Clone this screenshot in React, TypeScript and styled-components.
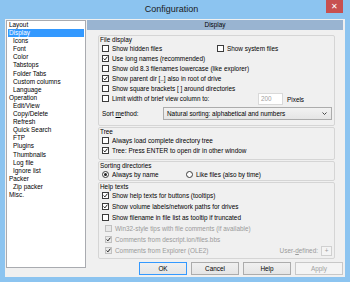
import React from "react";
import styled, { createGlobalStyle } from "styled-components";

const GlobalStyle = createGlobalStyle`
  html, body { margin: 0; padding: 0; }
  body {
    width: 350px;
    height: 282px;
    overflow: hidden;
    background: #8cc4f0;
    font-family: "Liberation Sans", Arial, sans-serif;
  }
`;

const Window = styled.div`
  width: 350px;
  height: 282px;
  box-sizing: border-box;
  padding: 0 5px 5px;
  background: #8cc4f0;
  display: flex;
  flex-direction: column;
`;

const TitleBar = styled.div`
  height: 19px;
  margin: 0 -5px;
  padding-right: 7px;
  display: grid;
  grid-template-columns: 1fr auto 1fr;
  align-items: start;
`;

const Title = styled.div`
  grid-column: 2;
  line-height: 18px;
  font-size: 9px;
  color: #1a1a1a;
`;

const CloseButton = styled.div`
  justify-self: end;
  width: 17px;
  height: 13px;
  background: #c75050;
  color: #fff;
  font-size: 8px;
  line-height: 13px;
  text-align: center;
`;

const Client = styled.div`
  flex: 1;
  background: #f0f0f0;
  display: flex;
  gap: 1px;
  padding: 1px 2px 0 1px;
  font-size: 6.4px;
  color: #000;
`;

const Sidebar = styled.div`
  width: 80px;
  height: 248px;
  box-sizing: border-box;
  border: 1px solid #a9abb0;
  background: #fff;
  padding: 0 1px;
`;

const TreeItem = styled.div<{ $level: number; $selected?: boolean }>`
  height: 8.1px;
  line-height: 8.1px;
  padding-left: ${(p) => (p.$level ? 5 : 1)}px;
  background: ${(p) => (p.$selected ? "#3399ff" : "transparent")};
  color: ${(p) => (p.$selected ? "#fff" : "#000")};
  white-space: nowrap;
`;

const Main = styled.div`
  flex: 1;
  display: flex;
  flex-direction: column;
`;

const PageHeader = styled.div`
  height: 10px;
  line-height: 10px;
  background: #99b4d1;
  text-align: center;
`;

const Groups = styled.div`
  display: flex;
  flex-direction: column;
  gap: 1px;
  padding: 5px 8px 0 11px;
`;

const GroupBox = styled.div<{ $pad: number }>`
  border: 1px solid #d5d5d5;
  border-radius: 2px;
  padding: 0 2px ${(p) => p.$pad}px 3px;
`;

const Legend = styled.div`
  height: 6px;
  line-height: 6px;
  margin: 1px 0 0 -2px;
  white-space: nowrap;
`;

const Row = styled.div<{ $h?: number; $indent?: number }>`
  height: ${(p) => p.$h ?? 10}px;
  display: flex;
  align-items: center;
  padding-left: ${(p) => p.$indent ?? 0}px;
  white-space: nowrap;
`;

const Option = styled.label<{ $w?: number; $disabled?: boolean }>`
  display: flex;
  align-items: center;
  gap: 3px;
  width: ${(p) => (p.$w ? `${p.$w}px` : "auto")};
  flex: none;
  color: ${(p) => (p.$disabled ? "#9a9a9a" : "#000")};
`;

const Box = styled.span<{ $disabled?: boolean }>`
  width: 7px;
  height: 7px;
  box-sizing: border-box;
  border: 1px solid ${(p) => (p.$disabled ? "#c0c0c0" : "#3c3c3c")};
  background: ${(p) => (p.$disabled ? "#e8e8e8" : "#fff")};
  display: flex;
  align-items: center;
  justify-content: center;
  flex: none;
`;

const Radio = styled(Box)`
  border-radius: 50%;
`;

const Dot = styled.span`
  width: 3px;
  height: 3px;
  border-radius: 50%;
  background: #222;
`;

const NumberInput = styled.div`
  width: 25px;
  height: 12px;
  box-sizing: border-box;
  border: 1px solid #d9d9d9;
  background: #fff;
  color: #a0a0a0;
  line-height: 10px;
  padding-left: 2px;
  margin-top: 2px;
`;

const Unit = styled.span`
  margin-left: 4px;
  margin-top: 2px;
`;

const FieldLabel = styled.span<{ $w: number }>`
  width: ${(p) => p.$w}px;
  flex: none;
`;

const Select = styled.div`
  width: 169px;
  height: 13px;
  box-sizing: border-box;
  border: 1px solid #acacac;
  background: linear-gradient(#f2f2f2, #e5e5e5);
  display: flex;
  align-items: center;
  padding: 0 4px 0 3px;
`;

const SelectText = styled.span`
  flex: 1;
`;

const Key = styled.span`
  text-decoration: underline;
`;

const Spacer = styled.span`
  flex: 1;
`;

const DisabledText = styled.span`
  color: #9a9a9a;
`;

const SmallButton = styled.div`
  width: 11px;
  height: 10px;
  box-sizing: border-box;
  border: 1px solid #d0d0d0;
  background: #f4f4f4;
  color: #9a9a9a;
  text-align: center;
  line-height: 8px;
  margin-left: 3px;
`;

const ButtonRow = styled.div`
  margin-top: auto;
  padding-bottom: 2px;
  display: flex;
  justify-content: flex-end;
  gap: 4px;
`;

const Button = styled.div<{ $default?: boolean; $disabled?: boolean }>`
  width: 48px;
  height: 13px;
  box-sizing: border-box;
  border: 1px solid
    ${(p) => (p.$default ? "#3399ff" : p.$disabled ? "#c8c8c8" : "#acacac")};
  background: ${(p) =>
    p.$disabled ? "#f4f4f4" : "linear-gradient(#f0f0f0, #e5e5e5)"};
  color: ${(p) => (p.$disabled ? "#a0a0a0" : "#000")};
  text-align: center;
  line-height: 11px;
`;

const CheckMark = () => (
  <svg width="5" height="5" viewBox="0 0 5 5">
    <path d="M0.6 2.5 L1.9 3.9 L4.4 0.7" fill="none" stroke="#222" strokeWidth="1" />
  </svg>
);

interface ICheck {
  label: React.ReactNode;
  checked?: boolean;
  disabled?: boolean;
  width?: number;
}

const Check = (props: ICheck) => (
  <Option $w={props.width} $disabled={props.disabled}>
    <Box $disabled={props.disabled}>{props.checked && <CheckMark />}</Box>
    <span>{props.label}</span>
  </Option>
);

const RadioOption = (props: ICheck) => (
  <Option $w={props.width}>
    <Radio>{props.checked && <Dot />}</Radio>
    <span>{props.label}</span>
  </Option>
);

const tree: [string, number][] = [
  ["Layout", 0],
  ["Display", 0],
  ["Icons", 1],
  ["Font", 1],
  ["Color", 1],
  ["Tabstops", 1],
  ["Folder Tabs", 1],
  ["Custom columns", 1],
  ["Language", 1],
  ["Operation", 0],
  ["Edit/View", 1],
  ["Copy/Delete", 1],
  ["Refresh", 1],
  ["Quick Search", 1],
  ["FTP", 1],
  ["Plugins", 1],
  ["Thumbnails", 1],
  ["Log file", 1],
  ["Ignore list", 1],
  ["Packer", 0],
  ["Zip packer", 1],
  ["Misc.", 0],
];

const App = () => {
  return (
    <>
      <GlobalStyle />
      <Window>
        <TitleBar>
          <Title>Configuration</Title>
          <CloseButton>✕</CloseButton>
        </TitleBar>
        <Client>
          <Sidebar>
            {tree.map(([name, level]) => (
              <TreeItem key={name} $level={level} $selected={name === "Display"}>
                {name}
              </TreeItem>
            ))}
          </Sidebar>
          <Main>
            <PageHeader>Display</PageHeader>
            <Groups>
              <GroupBox $pad={2}>
                <Legend>File display</Legend>
                <Row>
                  <Check label="Show hidden files" width={115} />
                  <Check label="Show system files" />
                </Row>
                <Row>
                  <Check label="Use long names (recommended)" checked />
                </Row>
                <Row>
                  <Check label="Show old 8.3 filenames lowercase (like explorer)" />
                </Row>
                <Row>
                  <Check label="Show parent dir [..] also in root of drive" checked />
                </Row>
                <Row>
                  <Check label="Show square brackets [ ] around directories" />
                </Row>
                <Row>
                  <Check label="Limit width of brief view column to:" width={156} />
                  <NumberInput>200</NumberInput>
                  <Unit>Pixels</Unit>
                </Row>
                <Row $h={20}>
                  <FieldLabel $w={61}>
                    Sort <Key>m</Key>ethod:
                  </FieldLabel>
                  <Select>
                    <SelectText>Natural sorting: alphabetical and numbers</SelectText>
                    <svg width="5" height="3" viewBox="0 0 5 3">
                      <path d="M0.5 0.5 L2.5 2.5 L4.5 0.5" fill="none" stroke="#333" strokeWidth="0.9" />
                    </svg>
                  </Select>
                </Row>
              </GroupBox>
              <GroupBox $pad={4}>
                <Legend>Tree</Legend>
                <Row>
                  <Check label="Always load complete directory tree" />
                </Row>
                <Row>
                  <Check label="Tree: Press ENTER to open dir in other window" checked />
                </Row>
              </GroupBox>
              <GroupBox $pad={1}>
                <Legend>Sorting directories</Legend>
                <Row>
                  <RadioOption label="Always by name" checked width={84} />
                  <RadioOption label="Like files (also by time)" />
                </Row>
              </GroupBox>
              <GroupBox $pad={2}>
                <Legend>Help texts</Legend>
                <Row $h={11}>
                  <Check label="Show help texts for buttons (tooltips)" checked />
                </Row>
                <Row $h={11}>
                  <Check label="Show volume labels/network paths for drives" checked />
                </Row>
                <Row $h={11}>
                  <Check label="Show filename in file list as tooltip if truncated" />
                </Row>
                <Row $h={11} $indent={3}>
                  <Check label="Win32-style tips with file comments (if available)" disabled />
                </Row>
                <Row $h={11} $indent={3}>
                  <Check label="Comments from descript.ion/files.bbs" checked disabled />
                </Row>
                <Row $h={11} $indent={3}>
                  <Check label="Comments from Explorer (OLE2)" checked disabled />
                  <Spacer />
                  <DisabledText>
                    User-<Key>d</Key>efined:
                  </DisabledText>
                  <SmallButton>+</SmallButton>
                </Row>
              </GroupBox>
            </Groups>
            <ButtonRow>
              <Button $default>OK</Button>
              <Button>Cancel</Button>
              <Button>Help</Button>
              <Button $disabled>Apply</Button>
            </ButtonRow>
          </Main>
        </Client>
      </Window>
    </>
  );
};

export default App;
